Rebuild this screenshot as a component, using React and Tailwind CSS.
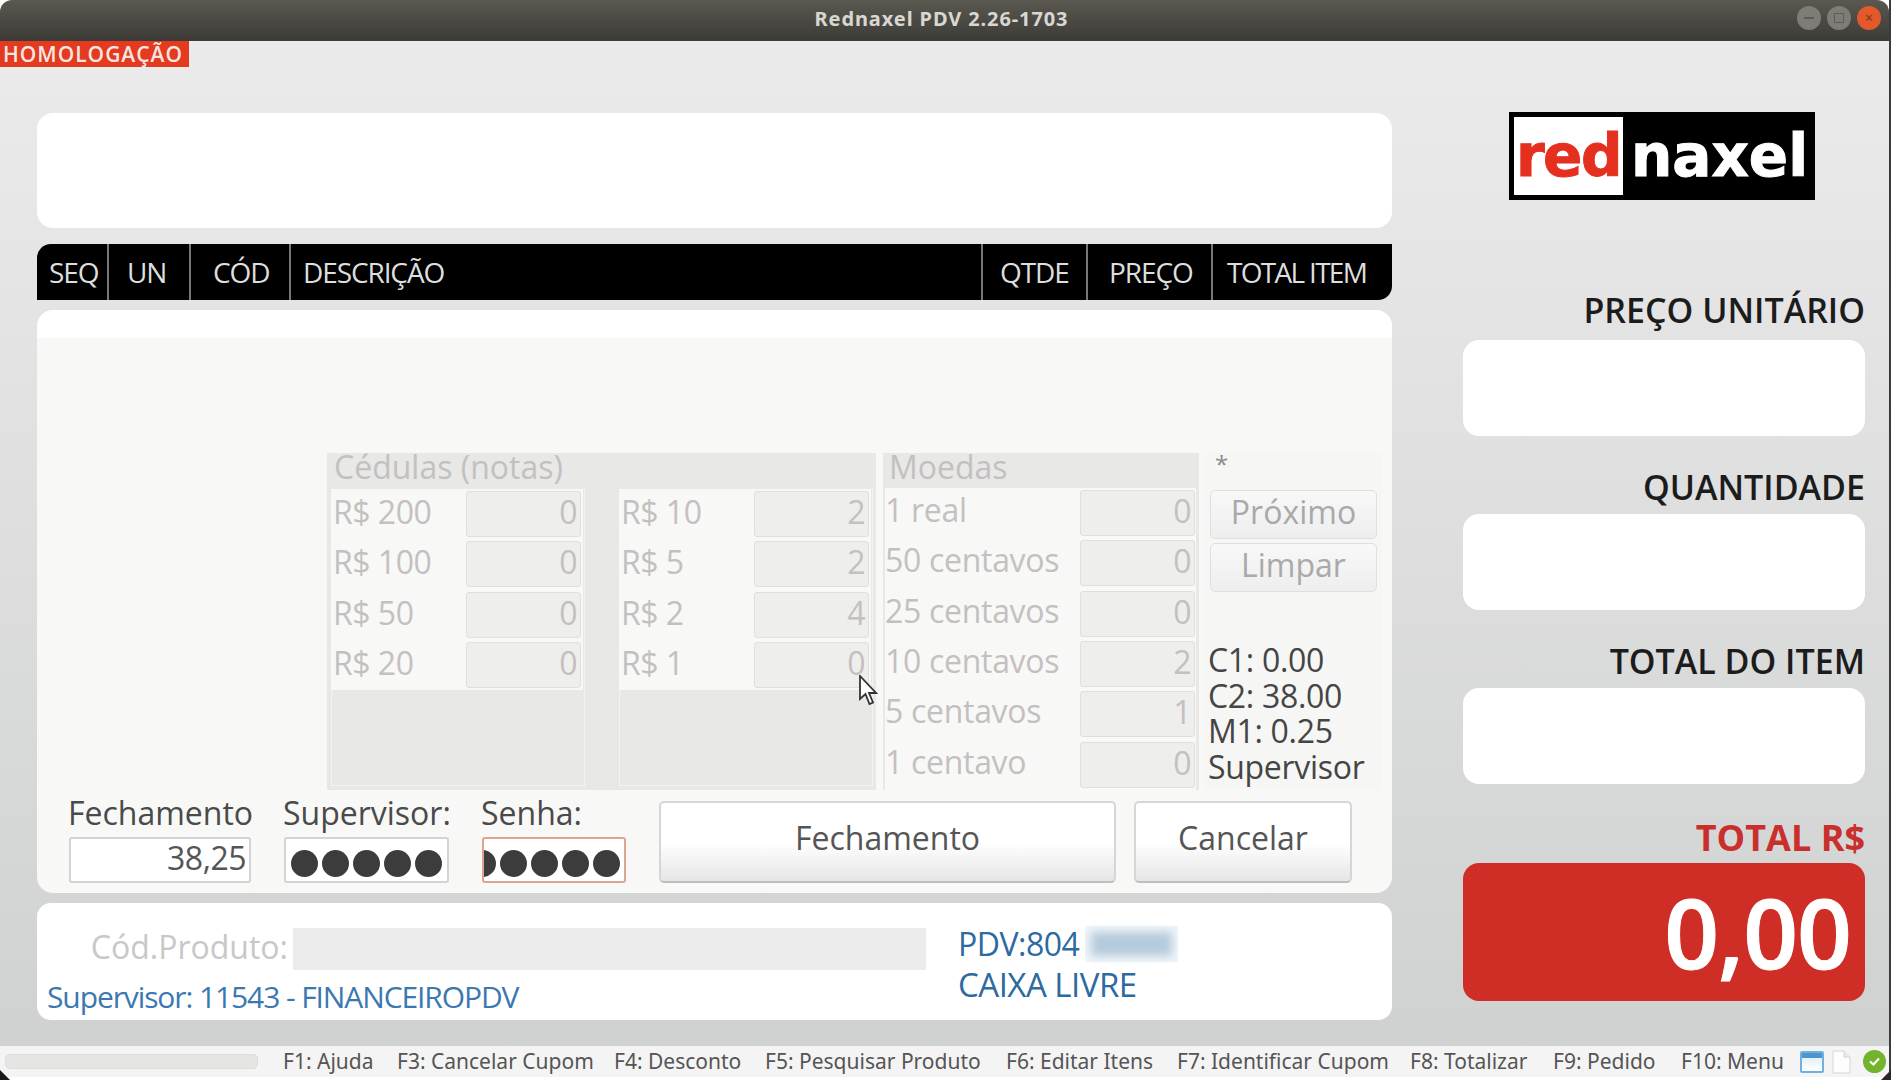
const disabled = "text-[#c4c0c0]";

function Field({ value }) {
  return (
    <div className={`flex h-[46px] w-[115px] items-center justify-end rounded-[3px] border border-[#e2dedd] bg-[#eeeeed] pr-[3px] pb-[4px] text-[32px] tracking-[-0.5px] ${disabled}`}>
      {value}
    </div>
  );
}

function MoneyColumn({ rows }) {
  return (
    <div className="flex h-[297px] w-[254px] flex-col bg-[#e8e8e7] shadow-[inset_0_0_0_1px_#f3f3f2]">
      {rows.map(([label, value]) => (
        <div key={label} className="flex h-[50.3px] w-[252px] items-center bg-[#f8f8f7]">
          <div className={`w-[135px] pb-[4px] pl-[2px] text-[32px] tracking-[-0.5px] ${disabled}`}>{label}</div>
          <Field value={value} />
        </div>
      ))}
    </div>
  );
}

function Dots({ clip }) {
  return (
    <div className={`flex gap-[4px] pt-[6px] ${clip ? "-ml-[15px]" : ""}`}>
      {[0, 1, 2, 3, 4].map((i) => (
        <div key={i} className="h-[27px] w-[27px] rounded-full bg-[#3c3c3c]" />
      ))}
    </div>
  );
}

function SideBox({ label, first }) {
  return (
    <div className={first ? "mt-[87px]" : "mt-[28px]"}>
      <div className="h-[47px] text-right text-[34px] leading-[47px] font-semibold text-[#1c1c1c]">{label}</div>
      <div className={`${first ? "mt-[6px]" : "mt-[3px]"} h-[96px] rounded-[16px] bg-white`} />
    </div>
  );
}

const headers = [
  ["SEQ", "w-[72px] pl-[12px]"],
  ["UN", "w-[82px] pl-[18px]"],
  ["CÓD", "w-[100px] pl-[22px]"],
  ["DESCRIÇÃO", "w-[692px] pl-[12px]"],
  ["QTDE", "w-[105px] pl-[17px]"],
  ["PREÇO", "w-[125px] pl-[21px]"],
  ["TOTAL ITEM", "flex-1 pl-[14px] tracking-[-1.7px]"],
];

const keys = [
  ["F1: Ajuda", "w-[114px]"],
  ["F3: Cancelar Cupom", "w-[217px]"],
  ["F4: Desconto", "w-[151px]"],
  ["F5: Pesquisar Produto", "w-[241px]"],
  ["F6: Editar Itens", "w-[171px]"],
  ["F7: Identificar Cupom", "w-[233px]"],
  ["F8: Totalizar", "w-[143px]"],
  ["F9: Pedido", "w-[128px]"],
  ["F10: Menu", "w-[119px]"],
];

export default function App() {
  return (
    <div className="relative flex h-[1080px] w-[1896px] overflow-hidden bg-white font-['Open_Sans',sans-serif]">
      <div className="flex h-[1077px] w-[1889px] flex-col">
        {/* barra de titulo */}
        <div className="relative flex h-[41px] shrink-0 items-center justify-center rounded-t-[12px] bg-gradient-to-b from-[#5b5850] to-[#3c3b37] pr-[6px] pb-[4px]">
          <span className="text-[20px] font-bold tracking-[0.9px] text-[#d8d7d2] font-['Noto_Sans',sans-serif]">Rednaxel PDV 2.26-1703</span>
          <div className="absolute top-[6px] right-[8px] flex gap-[6px]">
            <div className="flex h-[24px] w-[24px] items-center justify-center rounded-full bg-[#7d7c77]">
              <div className="h-[2px] w-[10px] bg-[#5d5c57]" />
            </div>
            <div className="flex h-[24px] w-[24px] items-center justify-center rounded-full bg-[#7d7c77]">
              <div className="h-[10px] w-[10px] border border-[#5d5c57]" />
            </div>
            <div className="flex h-[24px] w-[24px] items-center justify-center rounded-full bg-[#e2592b] text-[14px] leading-none text-[#7a3418]">×</div>
          </div>
        </div>

        <div className="flex min-h-0 flex-1 flex-col bg-gradient-to-b from-[#ebebeb] to-[#cfd0d0]">
          <div className="h-[26px] w-[189px] bg-[#e33a20] pl-[3px] text-[21px] leading-[26px] font-semibold tracking-[1px] whitespace-nowrap text-[#f6e6e0]">HOMOLOGAÇÃO</div>

          <div className="mt-[46px] flex">
            {/* coluna esquerda */}
            <div className="ml-[37px] w-[1355px]">
              <div className="h-[115px] rounded-[16px] bg-white" />

              <div className="mt-[16px] flex h-[56px] rounded-tl-[14px] rounded-br-[14px] bg-black text-[28px] leading-[56px] tracking-[-1.1px] text-[#dedede]">
                {headers.map(([text, cls], i) => (
                  <div key={text} className={`${cls} ${i < 6 ? "border-r-2 border-[#777]" : ""} whitespace-nowrap`}>{text}</div>
                ))}
              </div>

              <div className="mt-[10px] h-[583px] overflow-hidden rounded-[16px] bg-[#f8f8f7]">
                <div className="h-[28px] bg-white" />
                <div className="relative mt-[115px] ml-[290px] flex h-[337px]">
                  {/* cedulas */}
                  <div className="w-[549px] bg-[#e8e8e7]">
                    <div className={`h-[36px] pl-[7px] text-[32px] leading-[28px] ${disabled}`}>Cédulas (notas)</div>
                    <div className="flex pl-[4px]">
                      <MoneyColumn rows={[["R$ 200", "0"], ["R$ 100", "0"], ["R$ 50", "0"], ["R$ 20", "0"]]} />
                      <div className="w-[34px]" />
                      <MoneyColumn rows={[["R$ 10", "2"], ["R$ 5", "2"], ["R$ 2", "4"], ["R$ 1", "0"]]} />
                    </div>
                  </div>

                  {/* moedas */}
                  <div className="ml-[7px] w-[316px] bg-[#e8e8e7]">
                    <div className={`h-[35px] pl-[6px] text-[32px] leading-[28px] ${disabled}`}>Moedas</div>
                    <div className="ml-[2px] flex w-[311px] flex-col bg-[#f8f8f7]">
                      {[["1 real", "0"], ["50 centavos", "0"], ["25 centavos", "0"], ["10 centavos", "2"], ["5 centavos", "1"], ["1 centavo", "0"]].map(([label, value]) => (
                        <div key={label} className="flex h-[50.3px] items-center">
                          <div className={`w-[195px] pb-[6px] text-[32px] tracking-[-0.3px] whitespace-nowrap ${disabled}`}>{label}</div>
                          <Field value={value} />
                        </div>
                      ))}
                    </div>
                  </div>

                  {/* asterisco */}
                  <div className="ml-[6px] flex w-[177px] flex-col bg-[#f6f6f5]">
                    <div className="h-[37px] pl-[10px] text-[24px] leading-[22px] text-[#8a8a8a]">*</div>
                    <div className="mx-[5px] flex h-[49px] items-center justify-center rounded-[5px] border border-[#dfdfde] bg-gradient-to-b from-[#f8f8f8] to-[#eeeeee] pb-[6px] text-[32px] text-[#a9a9a9]">Próximo</div>
                    <div className="mx-[5px] mt-[4px] flex h-[49px] items-center justify-center rounded-[5px] border border-[#dfdfde] bg-gradient-to-b from-[#f8f8f8] to-[#eeeeee] pb-[6px] text-[32px] text-[#a9a9a9]">Limpar</div>
                    <div className="mt-[50px] pl-[3px] text-[32px] leading-[35.6px] tracking-[-0.3px] whitespace-nowrap text-[#454545]">
                      <div>C1: 0.00</div>
                      <div>C2: 38.00</div>
                      <div>M1: 0.25</div>
                      <div>Supervisor</div>
                    </div>
                  </div>

                  {/* ponteiro do mouse */}
                  <svg className="absolute top-[222px] left-[531px]" width="20" height="32" viewBox="0 0 20 32">
                    <path d="M2 1 L2 24 L7.5 19 L11.5 29 L15 27.5 L11 18 L18 18 Z" fill="#fff" stroke="#333" strokeWidth="1.8" />
                  </svg>
                </div>

                <div className="mt-[5px] flex items-end">
                  <div className="ml-[32px] w-[182px] shrink-0">
                    <div className="-ml-[1px] text-[32px] leading-[36px] whitespace-nowrap text-[#4a4a4a]">Fechamento</div>
                    <div className="mt-[6px] flex h-[46px] items-center justify-end rounded-[3px] border-2 border-[#d4d4d4] bg-white pr-[3px] pb-[4px] text-[32px] tracking-[-0.5px] text-[#555]">38,25</div>
                  </div>
                  <div className="ml-[33px] w-[165px] shrink-0">
                    <div className="-ml-[1px] text-[32px] leading-[36px] whitespace-nowrap text-[#4a4a4a]">Supervisor:</div>
                    <div className="mt-[6px] flex h-[46px] items-center rounded-[3px] border-2 border-[#d4d4d4] bg-white pl-[5px]"><Dots /></div>
                  </div>
                  <div className="ml-[33px] w-[144px] shrink-0">
                    <div className="-ml-[1px] text-[32px] leading-[36px] whitespace-nowrap text-[#4a4a4a]">Senha:</div>
                    <div className="mt-[6px] flex h-[46px] items-center overflow-hidden rounded-[3px] border-2 border-[#dba68f] bg-white"><Dots clip /></div>
                  </div>
                  <button className="ml-[33px] h-[82px] w-[457px] shrink-0 rounded-[5px] border-2 border-[#d6d6d6] border-b-[#bdbdbd] bg-gradient-to-b from-white from-50% to-[#e6e6e6] pb-[8px] text-[32px] text-[#555]">Fechamento</button>
                  <button className="ml-[18px] h-[82px] w-[218px] shrink-0 rounded-[5px] border-2 border-[#d6d6d6] border-b-[#bdbdbd] bg-gradient-to-b from-white from-50% to-[#e6e6e6] pb-[8px] text-[32px] text-[#555]">Cancelar</button>
                </div>
              </div>

              <div className="mt-[10px] flex h-[117px] rounded-[14px] bg-white">
                <div className="w-[921px] pt-[25px]">
                  <div className="flex h-[42px]">
                    <div className="w-[256px] pr-[5px] text-right text-[32px] leading-[38px] whitespace-nowrap text-[#c8c8c8]">Cód.Produto:</div>
                    <div className="w-[633px] bg-[#ebebeb]" />
                  </div>
                  <div className="mt-[7px] pl-[10px] text-[30px] leading-[40px] tracking-[-1.1px] whitespace-nowrap text-[#3b78b0]">Supervisor: 11543 - FINANCEIROPDV</div>
                </div>
                <div className="pt-[20px] text-[32px] leading-[41px] tracking-[-0.5px] whitespace-nowrap text-[#2d6a9f]">
                  <div className="flex items-center">
                    PDV:804
                    <div className="ml-[6px] h-[36px] w-[93px] bg-[#f0f5f9] p-[6px]">
                      <div className="h-full w-full bg-[#b5cbdd] blur-[4px]" />
                    </div>
                  </div>
                  <div className="text-[33px]">CAIXA LIVRE</div>
                </div>
              </div>
            </div>

            {/* coluna direita */}
            <div className="ml-[71px] w-[402px]">
              <div className="-mt-[1px] ml-[46px] flex h-[88px] w-[306px] items-center bg-black p-[5px]">
                <div className="flex h-[78px] w-[109px] items-center justify-center bg-white text-[58px] leading-none font-bold tracking-[-1.5px] text-[#e5301f] [-webkit-text-stroke:1px_#e5301f] font-['DejaVu_Sans',sans-serif]">red</div>
                <div className="ml-[8px] text-[58px] leading-none font-bold text-white [-webkit-text-stroke:1px_#fff] font-['DejaVu_Sans',sans-serif]">naxel</div>
              </div>
              <SideBox label="PREÇO UNITÁRIO" first />
              <SideBox label="QUANTIDADE" />
              <SideBox label="TOTAL DO ITEM" />
              <div className="mt-[30px] h-[47px] text-right text-[36px] leading-[47px] font-bold text-[#c9302c]">TOTAL R$</div>
              <div className="mt-[2px] flex h-[138px] items-center justify-end rounded-[16px] bg-[#cf2e27] pr-[14px] text-[96px] font-semibold tracking-[-1px] text-white [-webkit-text-stroke:1px_#fff]">0,00</div>
            </div>
          </div>

          <div className="flex-1" />

          {/* barra de status */}
          <div className="flex h-[31px] items-center bg-[#f4f4f4] text-[21px] whitespace-nowrap text-[#555] font-['Noto_Sans',sans-serif]">
            <div className="ml-[5px] h-[15px] w-[253px] rounded-[5px] border border-[#dcdcdb] bg-[#e5e5e4]" />
            <div className="ml-[25px] flex">
              {keys.map(([text, w]) => (
                <div key={text} className={w}>{text}</div>
              ))}
            </div>
            <div className="h-[22px] w-[24px] rounded-[2px] border-2 border-[#6fb0dc] bg-gradient-to-b from-[#dbeaf6] to-white">
              <div className="h-[5px] bg-[#4c95cf]" />
            </div>
            <svg className="ml-[8px]" width="19" height="24" viewBox="0 0 19 24">
              <path d="M1 1 H12 L18 7 V23 H1 Z" fill="#fdfdfd" stroke="#d5d5d5" />
              <path d="M12 1 V7 H18" fill="#ececec" stroke="#d5d5d5" />
            </svg>
            <div className="ml-[12px] flex h-[23px] w-[23px] items-center justify-center rounded-full bg-[#74b32e]">
              <svg width="13" height="13" viewBox="0 0 13 13"><path d="M2 6.5 L5.5 9.5 L11 3.5" fill="none" stroke="#fff" strokeWidth="2.2" /></svg>
            </div>
          </div>
        </div>
      </div>
      <div className="h-[1077px] w-[2px] bg-[#3c3b37]" />

      {/* cantos escuros da janela */}
      <svg className="absolute bottom-0 left-0" width="10" height="10" viewBox="0 0 10 10"><path d="M0 0 L10 10 H0 Z" fill="#1a1a1a" /></svg>
      <svg className="absolute right-[5px] bottom-0" width="10" height="10" viewBox="0 0 10 10"><path d="M10 0 V10 H0 Z" fill="#2a2723" /></svg>
    </div>
  );
}
